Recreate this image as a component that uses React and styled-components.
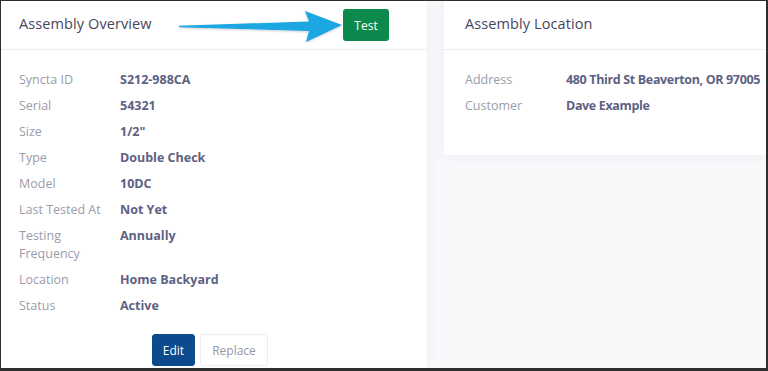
import React from "react";
import styled, { createGlobalStyle } from "styled-components";

const GlobalStyle = createGlobalStyle`
  html, body {
    margin: 0;
    padding: 0;
    background: #ffffff;
  }
  body {
    font-family: "Open Sans", "Noto Sans", sans-serif;
  }
`;

const Frame = styled.div`
  box-sizing: border-box;
  width: 768px;
  height: 371px;
  overflow: hidden;
  display: flex;
  background: #f8f8fb;
  border-style: solid;
  border-color: #2e2e2e;
  border-width: 1px 2px 3px 1px;
`;

const Card = styled.div`
  position: relative;
  background: #ffffff;
  display: flex;
  flex-direction: column;
  overflow: hidden;
  box-shadow: 0 0 12px rgba(82, 63, 105, 0.06);
  width: ${(p) => (p.$wide ? "426px" : "auto")};
  flex: ${(p) => (p.$wide ? "none" : "1")};
  align-self: ${(p) => (p.$wide ? "stretch" : "flex-start")};
  height: ${(p) => (p.$wide ? "auto" : "154px")};
  margin-left: ${(p) => (p.$wide ? "0" : "17px")};
`;

const CardHeader = styled.div`
  box-sizing: border-box;
  height: 49px;
  padding: 0 38px 0 ${(p) => p.$pad || 18}px;
  display: flex;
  align-items: center;
  justify-content: space-between;
  border-bottom: 1px solid #ebedf2;
`;

const Title = styled.h3`
  margin: 0 0 3px;
  font-size: 14.5px;
  font-weight: 500;
  color: #48465b;
  letter-spacing: 0.1px;
`;

const TestButton = styled.button`
  width: 46px;
  height: 32px;
  border: none;
  border-radius: 3px;
  background: #0c8a4e;
  color: #ffffff;
  font-family: inherit;
  font-size: 12px;
  font-weight: 500;
  padding: 0;
`;

const Body = styled.div`
  padding: 17px 0 0 ${(p) => p.$pad || 18}px;
`;

const Row = styled.div`
  display: grid;
  grid-template-columns: 101px 1fr;
  padding: 4px 0;
  line-height: 18px;
  font-size: 12.5px;
  white-space: nowrap;
`;

const Label = styled.span`
  color: #9a9cab;
  font-weight: 400;
`;

const Value = styled.span`
  color: #5d6283;
  font-weight: 700;
  font-size: 12.5px;
  letter-spacing: ${(p) => (p.$tight ? "-0.35px" : "0")};
`;

const Actions = styled.div`
  display: flex;
  gap: 5px;
  margin: 15px 0 0 133px;
`;

const ActionButton = styled.button`
  box-sizing: border-box;
  width: ${(p) => (p.$primary ? 43 : 68)}px;
  height: 32px;
  padding: 0;
  border-radius: 3px;
  font-family: inherit;
  font-size: 12px;
  font-weight: ${(p) => (p.$primary ? 500 : 400)};
  background: ${(p) => (p.$primary ? "#0b4a8c" : "#ffffff")};
  color: ${(p) => (p.$primary ? "#ffffff" : "#9597a6")};
  border: 1px solid ${(p) => (p.$primary ? "#0b4a8c" : "#ebedf2")};
`;

const ArrowMark = styled.svg`
  position: absolute;
  left: 176px;
  top: 8px;
  width: 168px;
  height: 36px;
  overflow: visible;
`;

const overview = [
  ["Syncta ID", "S212-988CA"],
  ["Serial", "54321"],
  ["Size", '1/2"'],
  ["Type", "Double Check"],
  ["Model", "10DC"],
  ["Last Tested At", "Not Yet"],
  ["Testing Frequency", "Annually"],
  ["Location", "Home Backyard"],
  ["Status", "Active"],
];

const location = [
  ["Address", "480 Third St Beaverton, OR 97005"],
  ["Customer", "Dave Example"],
];

const Pointer = () => (
  <ArrowMark viewBox="0 0 168 36">
    <defs>
      <filter id="shade" x="-10%" y="-30%" width="120%" height="160%">
        <feDropShadow dx="0" dy="1" stdDeviation="1" floodColor="#000" floodOpacity="0.2" />
      </filter>
    </defs>
    <path
      d="M2 16.8 L132 12.5 L128 2 L165 16 L129 33 L132 22 L2 18.2 Z"
      fill="#1aa6e2"
      filter="url(#shade)"
    />
  </ArrowMark>
);

const InfoRows = ({ items, tight }) =>
  items.map(([k, v]) => (
    <Row key={k}>
      <Label>
        {k === "Testing Frequency" ? (
          <>
            Testing
            <br />
            Frequency
          </>
        ) : (
          k
        )}
      </Label>
      <Value $tight={tight}>{v}</Value>
    </Row>
  ));

export default function App() {
  return (
    <>
      <GlobalStyle />
      <Frame>
        <Card $wide>
          <CardHeader>
            <Title>Assembly Overview</Title>
            <TestButton>Test</TestButton>
          </CardHeader>
          <Pointer />
          <Body>
            <InfoRows items={overview} />
            <Actions>
              <ActionButton $primary>Edit</ActionButton>
              <ActionButton>Replace</ActionButton>
            </Actions>
          </Body>
        </Card>
        <Card>
          <CardHeader $pad={21}>
            <Title>Assembly Location</Title>
          </CardHeader>
          <Body $pad={21}>
            <InfoRows items={location} tight />
          </Body>
        </Card>
      </Frame>
    </>
  );
}
